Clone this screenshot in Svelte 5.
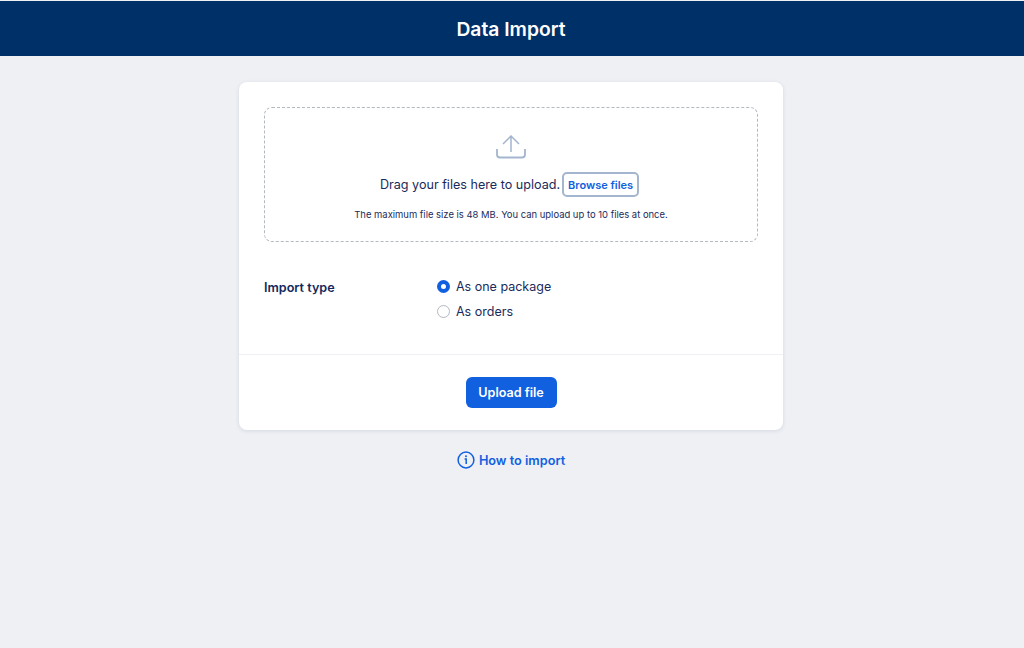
<script>
  let importType = $state('package');
</script>

<header class="topbar">
  <h1>Data Import</h1>
</header>

<main class="page">
  <section class="card">
    <div class="card-body">
      <div class="dropzone">
        <svg class="upload-icon" width="30" height="24" viewBox="0 0 30 24" fill="none" aria-hidden="true">
          <path d="M15 17V1M7 9l8-8 8 8" stroke="#a3b5cf" stroke-width="1.5" />
          <path d="M1 14v5.5a3 3 0 0 0 3 3h22a3 3 0 0 0 3-3V14" stroke="#a3b5cf" stroke-width="1.8" />
        </svg>
        <div class="drag-row">
          <span>Drag your files here to upload.</span>
          <button class="browse" type="button">Browse files</button>
        </div>
        <p class="hint">The maximum file size is 48 MB. You can upload up to 10 files at once.</p>
      </div>

      <div class="import-row">
        <div class="field-label">Import type</div>
        <div class="options">
          <label class="option">
            <input type="radio" name="import-type" value="package" bind:group={importType} />
            <span>As one package</span>
          </label>
          <label class="option">
            <input type="radio" name="import-type" value="orders" bind:group={importType} />
            <span>As orders</span>
          </label>
        </div>
      </div>
    </div>

    <div class="card-footer">
      <button class="primary" type="button">Upload file</button>
    </div>
  </section>

  <a class="help-link" href="#help">
    <svg width="18" height="18" viewBox="0 0 18 18" fill="none" aria-hidden="true">
      <circle cx="9" cy="9" r="7.9" stroke="#1160e0" stroke-width="1.5" />
      <path d="M7.6 8h1.6v5" stroke="#1160e0" stroke-width="1.5" />
      <circle cx="9" cy="5.2" r="1" fill="#1160e0" />
    </svg>
    How to import
  </a>
</main>

<style>
  :global(body) {
    margin: 0;
    background: #eef0f4;
    font-family: Inter, "Liberation Sans", sans-serif;
    color: #1a2b5b;
  }

  .topbar {
    height: 55px;
    margin-top: 1px;
    padding-right: 2px;
    background: #003068;
    display: flex;
    align-items: center;
    justify-content: center;
  }

  .topbar h1 {
    margin: 0;
    color: #fff;
    font-size: 19.3px;
    font-weight: 600;
  }

  .page {
    display: flex;
    flex-direction: column;
    align-items: center;
    padding: 26px 2px 0 0;
  }

  .card {
    width: 544px;
    background: #fff;
    border-radius: 8px;
    box-shadow: 0 1px 4px rgba(30, 50, 90, 0.12);
  }

  .card-body {
    padding: 25px 25px 22px 25px;
  }

  .dropzone {
    height: 135px;
    box-sizing: border-box;
    border: 1px dashed #b3b8c2;
    border-radius: 8px;
    display: flex;
    flex-direction: column;
    align-items: center;
    padding-top: 27px;
  }

  .upload-icon {
    display: block;
  }

  .drag-row {
    display: flex;
    align-items: center;
    gap: 2px;
    margin-top: 13px;
    padding-right: 3px;
    font-size: 12.6px;
    color: #1a2b5b;
  }

  .browse {
    height: 25px;
    width: 77px;
    padding: 0;
    background: #fff;
    border: 2px solid #a3b5cf;
    border-radius: 5px;
    color: #1160e0;
    font: 600 11px Inter, "Liberation Sans", sans-serif;
  }

  .hint {
    margin: 11px 0 0;
    font-size: 9.45px;
    line-height: 13px;
    color: #1a2b5b;
  }

  .import-row {
    display: flex;
    margin-top: 35px;
    padding-bottom: 12px;
  }

  .field-label {
    width: 173px;
    padding-top: 3px;
    font-size: 12.6px;
    font-weight: 600;
    color: #14285c;
  }

  .options {
    display: flex;
    flex-direction: column;
    gap: 7px;
  }

  .option {
    display: flex;
    align-items: center;
    gap: 6px;
    height: 18px;
    font-size: 12.5px;
    color: #1a2b5b;
  }

  .option input {
    appearance: none;
    box-sizing: border-box;
    width: 13px;
    height: 13px;
    margin: 0;
    background: #fff;
    border: 1px solid #b3b8c2;
    border-radius: 50%;
  }

  .option input:checked {
    border: 4px solid #1160e0;
  }

  .card-footer {
    border-top: 1px solid #eef0f4;
    display: flex;
    justify-content: center;
    padding: 22px 0;
  }

  .primary {
    width: 91px;
    height: 31px;
    padding: 0;
    background: #1160e0;
    border: 0;
    border-radius: 6px;
    color: #fff;
    font: 600 12.6px Inter, "Liberation Sans", sans-serif;
  }

  .help-link {
    display: flex;
    align-items: center;
    gap: 4px;
    margin-top: 21px;
    color: #1160e0;
    font-size: 12.7px;
    font-weight: 600;
    text-decoration: none;
  }
</style>
